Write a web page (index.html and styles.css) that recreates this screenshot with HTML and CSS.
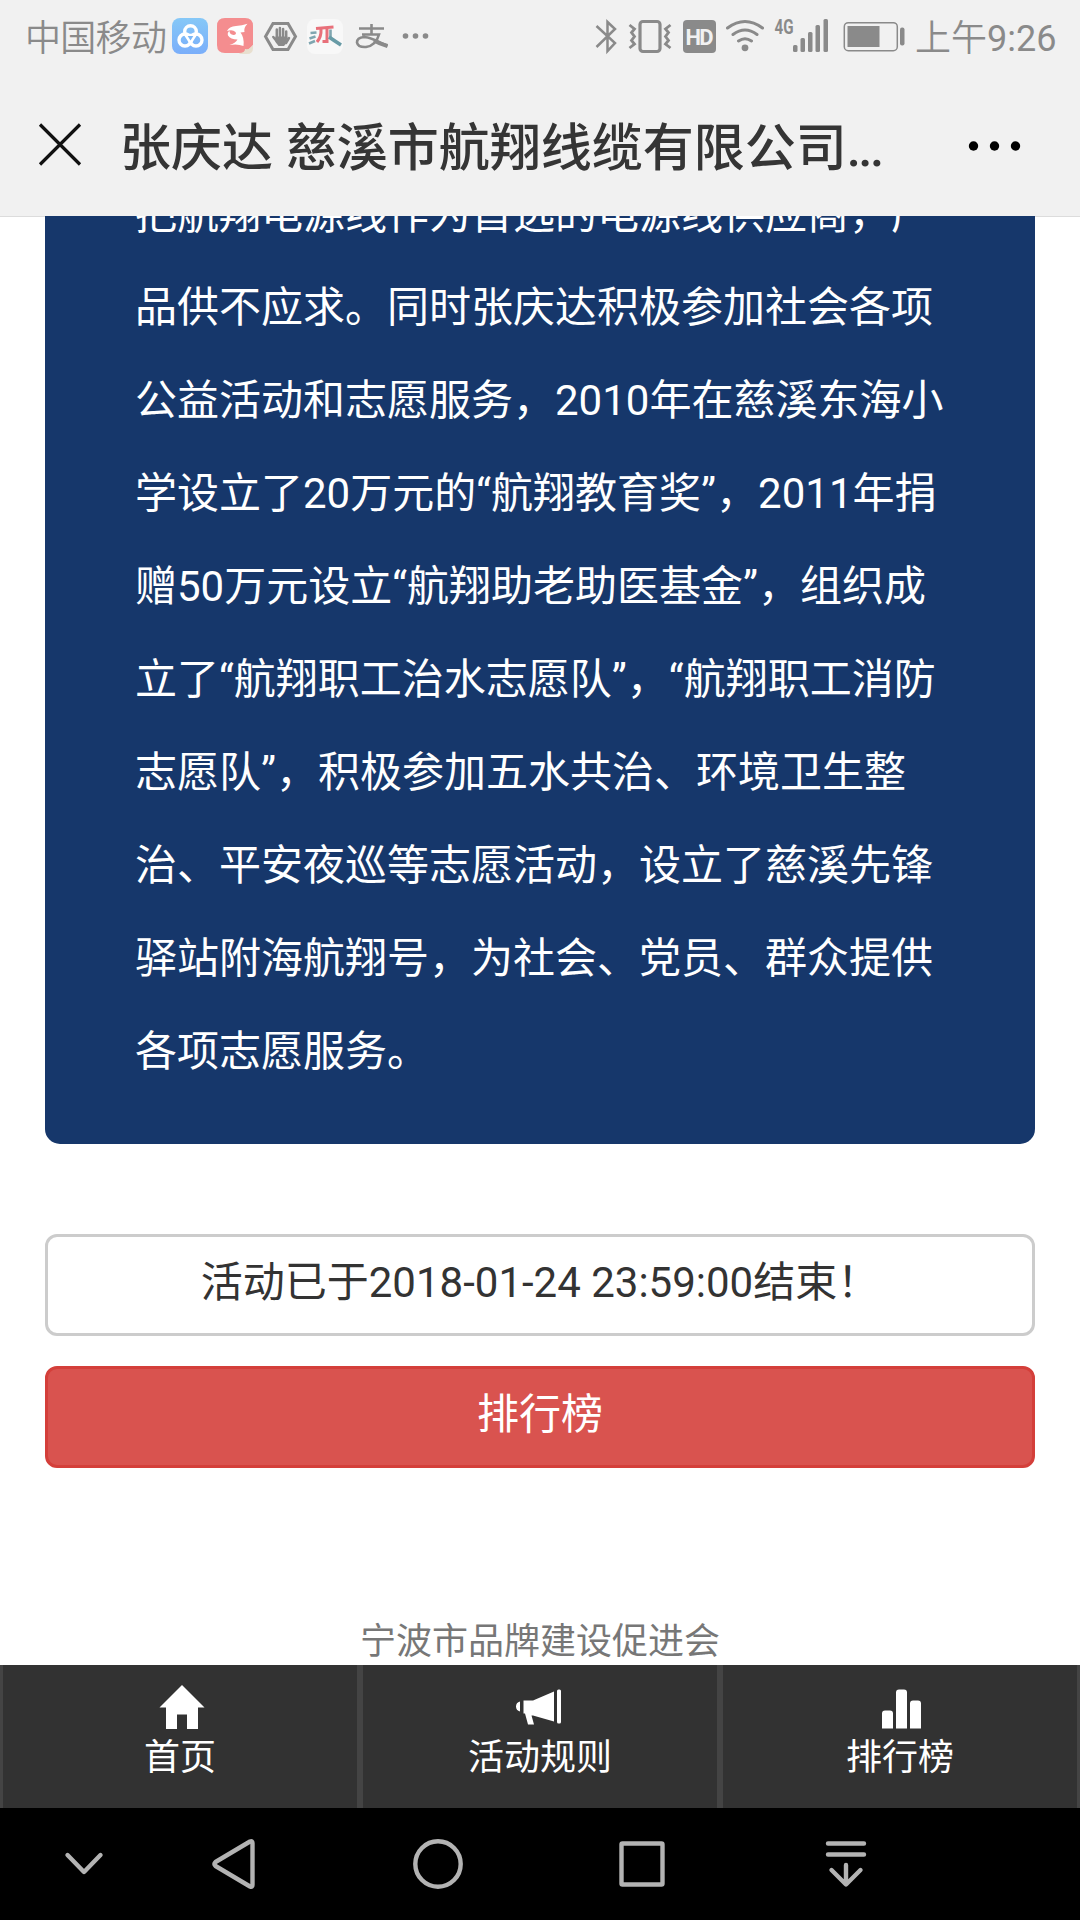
FILE: index.html
```html
<!DOCTYPE html>
<html lang="zh-CN">
<head>
<meta charset="utf-8">
<title>张庆达 慈溪市航翔线缆有限公司</title>
<link rel="stylesheet" href="styles.css">
</head>
<body>
<header class="top">
  <div class="status">
    <span class="carrier">中国移动</span>
    <svg class="status-apps" width="270" height="44" viewBox="165 14 270 44">
      <defs>
        <linearGradient id="sky" x1="0" y1="0" x2="0" y2="1"><stop offset="0" stop-color="#86c8f7"/><stop offset="1" stop-color="#7aaefa"/></linearGradient>
      </defs>
      <rect x="172" y="18" width="36" height="36" rx="8" fill="url(#sky)"/>
      <g fill="none" stroke="#fff" stroke-width="3.400" stroke-linejoin="round"><circle cx="190.500" cy="31.500" r="5.800"/><circle cx="185" cy="40" r="6"/><circle cx="196" cy="40" r="6"/><path d="M185.500 35h10l-5 8z" stroke-width="2.400"/></g>
      <path d="M190.500 40.500l-2.800-4.500h5.600z" fill="#7db8f8"/>
      <path d="M225 18h20q8 0 8 8v19l-8 8h-20q-8 0-8-8V26q0-8 8-8z" fill="#f48d8f"/>
      <path d="M239 53q6 0 6-4q5 1 8-4v3q0 6-6 6h-7z" fill="#e8dfcf"/>
      <path d="M227 31q2-4.500 9-5q6-.300 11.500-2.200q-4 4-3 8.200l-4 .5q4 5 3 13.500q-6-2.500-14-1q6-2 8-5.500q-7 0-9.500-4q-1-3 1.500-4.500q0 3.500 4 4q3.500-.5 2-3q-3-3-8.500-1z" fill="#fff"/>
      <path d="M273 23.500h15l7.500 13-7.500 13h-15l-7.500-13z" fill="none" stroke="#8a8a8a" stroke-width="3"/>
      <path d="M276.800 38.500V29.500M279.900 37V28M283.100 37v-8M286.200 38v-6.500M273.300 37l4 5M289 38l-3 5" fill="none" stroke="#8a8a8a" stroke-width="2.500" stroke-linecap="round"/>
      <path d="M275.600 36.500H287.400l-1 6.500-2.400 3h-5.500l-3-4z" fill="#8a8a8a"/>
      <rect x="307" y="19" width="36" height="35" rx="8" fill="#f8f8f8"/>
      <g fill="none" stroke-width="3"><path d="M316 28.500l17.500-1.500M321 29.500q.5 7-4 12.500M327 29v12.500h-4.500" stroke="#e8707a"/><path d="M330.500 29.500v8M310.500 33l6-.5M309.500 38.500l6-2M309 43.500l6-2.500" stroke="#7fa6b0" stroke-width="2.600"/><path d="M329 37q5 3.500 12 8" stroke="#689ba6" stroke-width="3.600"/></g>
      <g fill="none" stroke="#8a8a8a" stroke-width="2.600"><path d="M359 28.500h25M371.500 24v10M362 34.500h17q-3 11-13 12.500q-8 .5-9-4.500q0-5 7-5.500q6 0 23.500 9"/><path d="M374 40.500q6 3.500 13.500 5.500" stroke-width="4"/></g>
      <g fill="#8a8a8a"><circle cx="405.500" cy="36" r="2.800"/><circle cx="415.500" cy="36" r="2.800"/><circle cx="425.500" cy="36" r="2.800"/></g>
    </svg>
    <svg class="status-system" width="320" height="44" viewBox="590 14 320 44">
      <path d="M596.500 26l18.500 17-7.500 8V22l7.500 7-18.500 18" fill="none" stroke="#8a8a8a" stroke-width="2.500"/>
      <rect x="640" y="21.500" width="20" height="30" rx="3" fill="none" stroke="#8a8a8a" stroke-width="3.200"/>
      <path d="M629.500 25l5 4-3 3.500 3 4-3 4 3 3.500-5 4M670.500 25l-5 4 3 3.500-3 4 3 4-3 3.500 5 4" fill="none" stroke="#8a8a8a" stroke-width="2.800"/>
      <rect x="683" y="20" width="33" height="33" rx="4" fill="#8a8a8a"/>
      <text class="hd" x="685.500" y="44.500" textLength="28">HD</text>
      <g fill="none" stroke="#8a8a8a" stroke-width="3" stroke-linecap="round"><path d="M727.500 28q17.500-13 35 0M733 34.500q12-9 24 0M738.500 41q6.500-4.500 13 0"/></g>
      <circle cx="745" cy="47.800" r="3.400" fill="#8a8a8a"/>
      <text class="net" x="774.500" y="33.500" textLength="19" lengthAdjust="spacingAndGlyphs">4G</text>
      <g fill="#8a8a8a"><rect x="793" y="45" width="4.500" height="7" rx="1.500"/><rect x="800.500" y="38" width="4.500" height="14" rx="1.500"/><rect x="808" y="32" width="4.500" height="20" rx="1.500"/><rect x="815.500" y="25" width="4.500" height="27" rx="1.500"/><rect x="823.500" y="19" width="4.500" height="33" rx="1.500"/></g>
      <rect x="844.300" y="22.700" width="53" height="28" rx="4" fill="none" stroke="#8a8a8a" stroke-width="1.500"/>
      <path d="M847.500 26h32v21h-32z" fill="#8a8a8a"/><rect x="900" y="27.500" width="4.500" height="18" rx="2" fill="#8a8a8a"/>
    </svg>
    <span class="time">上午<span class="digits">9:26</span></span>
  </div>
  <div class="titlebar">
    <svg class="close" width="44" height="44" viewBox="0 0 44 44"><path d="M2 1.500l40 40M42 1.500l-40 40" fill="none" stroke="#111" stroke-width="3.200"/></svg>
    <h1 class="title">张庆达 慈溪市航翔线缆有限公司<span class="dots">...</span></h1>
    <svg class="more" width="54" height="12" viewBox="0 0 54 12"><circle cx="5.500" cy="7" r="4.700"/><circle cx="26.500" cy="7" r="4.700"/><circle cx="47.500" cy="7" r="4.700"/></svg>
  </div>
</header>
<main class="page">
  <article class="card">
    <p class="story">把航翔电源线作为首选的电源线供应商，产<br>品供不应求。同时张庆达积极参加社会各项<br>公益活动和志愿服务，2010年在慈溪东海小<br>学设立了20万元的“航翔教育奖”，2011年捐<br>赠50万元设立“航翔助老助医基金”，组织成<br>立了“航翔职工治水志愿队”，“航翔职工消防<br>志愿队”，积极参加五水共治、环境卫生整<br>治、平安夜巡等志愿活动，设立了慈溪先锋<br>驿站附海航翔号，为社会、党员、群众提供<br>各项志愿服务。</p>
  </article>
  <div class="btn btn-default">活动已于2018-01-24 23:59:00结束！</div>
  <div class="btn btn-danger">排行榜</div>
  <p class="credit">宁波市品牌建设促进会</p>
</main>
<nav class="tabs">
  <a class="tab"><svg width="46" height="46" viewBox="-1 0 44 46"><path d="M23 1l22.500 22.500H39V45H28V30.500H18V45H7V23.500H.5z"/></svg><span>首页</span></a>
  <a class="tab"><svg width="48" height="46" viewBox="1 0 48 46"><path d="M5 17.500v10q-4-1-4-5t4-5zM8.500 16.500H18L39 7.500v30L18 31.500h-1.500L19 40.500h-6L10 29.500H8.500z"/><rect x="42" y="5.500" width="4" height="34" rx="1.500"/></svg><span>活动规则</span></a>
  <a class="tab"><svg width="40" height="46" viewBox="-1.500 0.500 40 46"><path d="M.5 45V30q0-3 3-3h5q3 0 3 3v15zM14.500 45V9q0-3 3-3h5q3 0 3 3v36zM28.500 45V20q0-3 3-3h5q3 0 3 3v25z"/></svg><span>排行榜</span></a>
</nav>
<footer class="sysnav">
  <svg width="1080" height="112" viewBox="0 1808 1080 112" fill="none" stroke="#b3b3b3" stroke-width="4.400" stroke-linecap="round" stroke-linejoin="round">
    <path d="M67.500 1855l16.500 17 16.500-17"/>
    <path d="M250 1841.500q2.500-1.200 2.500 1.500v42q0 2.700-2.500 1.500l-34.500-20.500q-2-2 0-4z"/>
    <circle cx="438" cy="1864" r="22.700"/>
    <rect x="621.500" y="1843.500" width="41" height="41" rx="1"/>
    <path d="M828 1843.500h36M828 1854.500h36M846 1865v19M831.500 1870l14.500 14.500 14.500-14.500"/>
  </svg>
</footer>
</body>
</html>
```

FILE: styles.css
```css
* { box-sizing: border-box; }

body {
  margin: 0;
  height: 1920px;
  display: flex;
  flex-direction: column;
  overflow: hidden;
  background: #fff;
  color: #333;
  font-family: Roboto, "Noto Sans CJK SC", sans-serif;
}

svg { display: block; flex: none; overflow: visible; }
p, h1 { margin: 0; }

.top {
  flex: none;
  height: 216px;
  background: #f1f1f1;
}

.status {
  height: 72px;
  padding: 0 24px 0 25px;
  display: flex;
  align-items: center;
  color: #8a8a8a;
  font-size: 36px;
  font-weight: 350;
  line-height: 44px;
  white-space: nowrap;
}
.carrier { width: 140px; padding-top: 5px; letter-spacing: -0.7px; }
.status-system { margin-left: 155px; }
.time { margin-left: 5px; padding-top: 5px; }
.digits { font-weight: 400; }
.hd { font: 700 22px Roboto, sans-serif; fill: #f1f1f1; }
.net { font: 700 21px Roboto, sans-serif; fill: #8a8a8a; }

.titlebar {
  height: 144px;
  padding: 2px 58px 0 38px;
  display: flex;
  align-items: center;
}
.title {
  margin-left: 38px;
  padding-top: 8px;
  flex: 1;
  font-size: 51px;
  line-height: 60px;
  font-weight: 500;
  color: #353535;
  white-space: nowrap;
}
.dots { letter-spacing: -2.5px; }
.more { fill: #000; }

.page {
  flex: 1;
  min-height: 0;
  overflow: hidden;
  padding: 0 45px;
  background: linear-gradient(#dcdcdc, #dcdcdc) top / 100% 1px no-repeat;
}
.card {
  margin-top: -88px;
  padding: 40px 0 46px 90px;
  background: #16376b;
  color: #fff;
  border-radius: 15px;
}
.story {
  font-size: 42px;
  line-height: 93px;
  white-space: nowrap;
}
.btn {
  height: 102px;
  border: 3px solid #ccc;
  border-radius: 12px;
  font-size: 42px;
  line-height: 92px;
  text-align: center;
}
.btn-default { margin-top: 90px; background: #fff; }
.btn-danger { margin-top: 30px; background: #d9534f; border-color: #d43f3a; color: #fff; }
.credit {
  margin-top: 149px;
  font-size: 36px;
  line-height: 50px;
  text-align: center;
  color: #777;
}

.tabs {
  flex: none;
  height: 143px;
  display: grid;
  grid-template-columns: repeat(3, 1fr);
  background: #323232;
}
.tab {
  border: 3px solid #444;
  border-width: 0 3px;
  padding-top: 19px;
  display: flex;
  flex-direction: column;
  align-items: center;
  gap: 3px;
  color: #fff;
  fill: #fff;
  font-size: 36px;
  line-height: 50px;
}

.sysnav { flex: none; height: 112px; background: #000; }
```
